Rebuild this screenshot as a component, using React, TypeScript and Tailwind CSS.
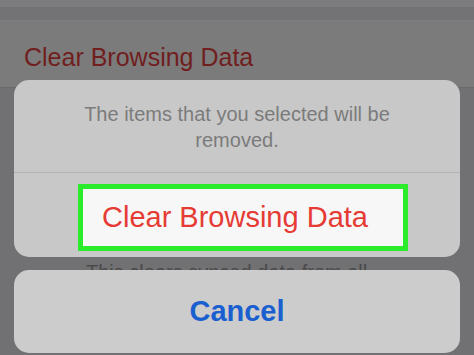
export default function App() {
    return (
        <main className="relative h-[355px] w-[474px] overflow-hidden bg-[#717174] font-['Liberation_Sans',Arial,sans-serif]">
            {/* Dimmed page behind the sheet */}
            <div className="h-[7px] bg-[#7c7c7e]" />
            <div className="h-[14px] border-b border-[#7e7e7e] bg-[#737376]" />
            <div className="flex h-[67px] items-center border-b border-[#6a6a6c] bg-[#7b7b7b] pl-[24px]">
                <span className="pt-[8px] text-[25px] text-[#701e1e]">Clear Browsing Data</span>
            </div>
            <p className="mt-[172px] pl-[86px] text-[20px] leading-[24px] text-[#4a4a4a]">
                This clears synced data from all
            </p>

            {/* Action sheet */}
            <div className="absolute inset-x-[14px] top-[80px] flex flex-col gap-[13px]">
                <div className="flex h-[177px] flex-col rounded-[15px] bg-[#c8c8c8]">
                    <p className="border-b border-[#b2b2b2] px-6 pt-[21px] pb-[19px] text-center text-[20px] leading-[26px] text-[#7b7b7b]">
                        The items that you selected will be
                        <br />
                        removed.
                    </p>
                    <div className="pt-[11px]">
                        <div className="ml-[64px] flex h-[67px] w-[330px] items-center border-[5px] border-[#2bec2b] bg-[#f7f7f7] pl-[19px]">
                            <span className="text-[29px] leading-none text-[#e63b35]">Clear Browsing Data</span>
                        </div>
                    </div>
                </div>
                <div className="flex h-[83px] items-center justify-center rounded-[15px] bg-[#cccccc]">
                    <span className="text-[29px] font-bold text-[#1a5fcf]">Cancel</span>
                </div>
            </div>
        </main>
    );
}
